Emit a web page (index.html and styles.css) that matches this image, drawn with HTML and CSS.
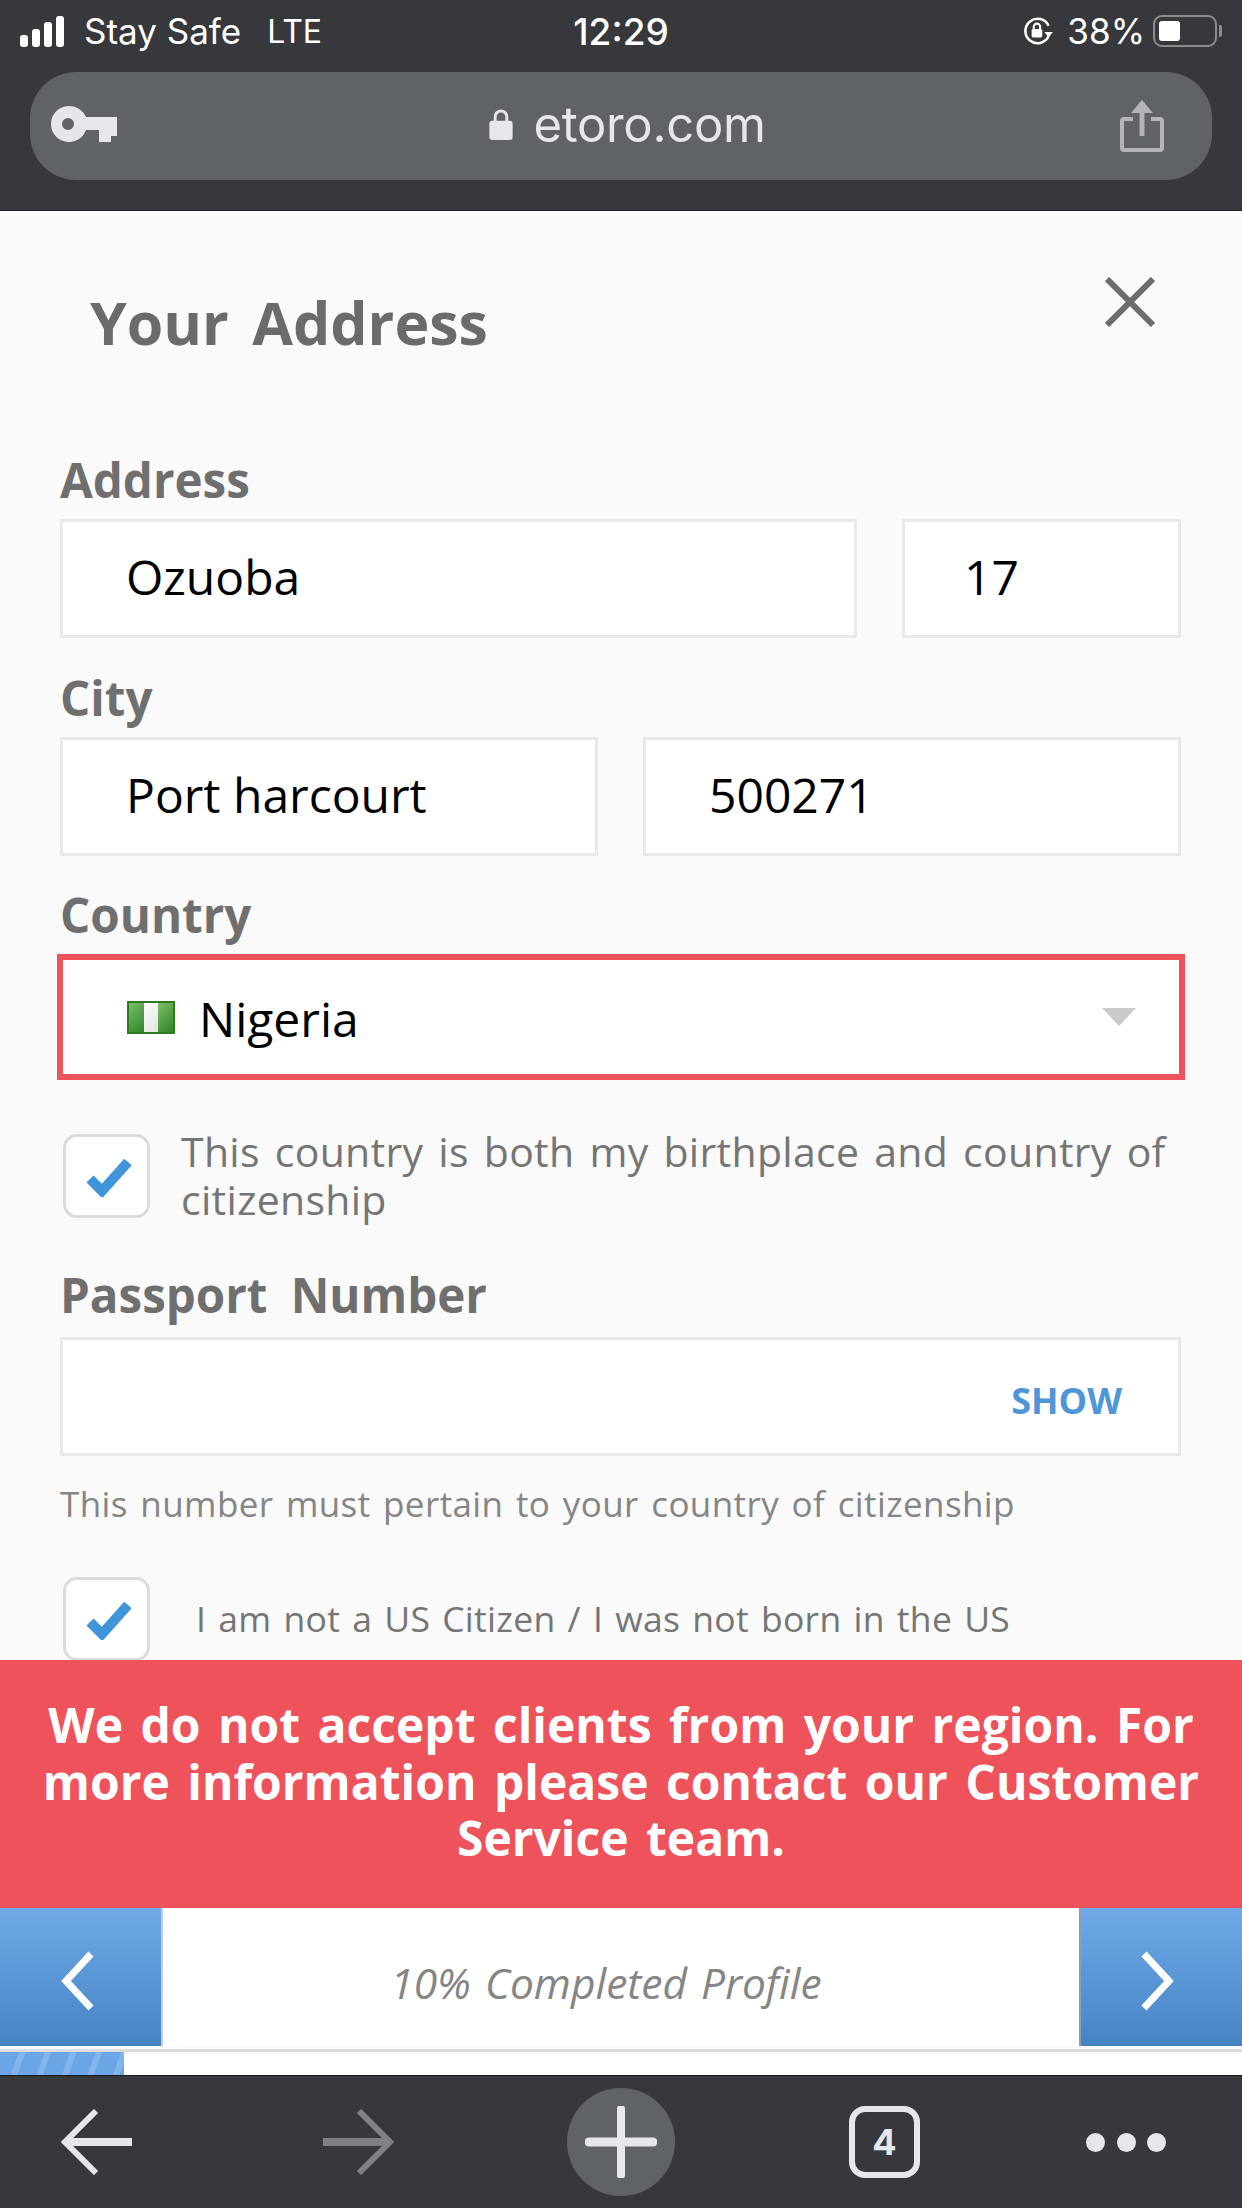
FILE: index.html
```html
<!DOCTYPE html>
<html lang="en">
<head>
    <meta charset="UTF-8">
    <meta name="viewport" content="width=device-width, initial-scale=1.0">
    <title>Your Address</title>
    <link rel="stylesheet" href="styles.css">
</head>
<body>
<div class="phone">

    <!-- Browser top bar -->
    <header class="browser-top">
        <div class="status-bar">
            <div class="status-left">
                <span class="signal"><i></i><i></i><i></i><i></i></span>
                <span class="carrier">Stay Safe</span>
                <span class="network">LTE</span>
            </div>
            <div class="status-time">12:29</div>
            <div class="status-right">
                <svg class="lock-rotate" viewBox="0 0 28 32" width="30" height="34">
                    <path d="M24 21a11.500 11.500 0 1 1 0-10" fill="none" stroke="#fff" stroke-width="2.4"/>
                    <path d="M20 17h8l-4 5z" fill="#fff"/>
                    <rect x="8" y="14" width="10" height="8" rx="1.500" fill="#fff"/>
                    <path d="M10 14V12a3 3 0 0 1 6 0v2" fill="none" stroke="#fff" stroke-width="2"/>
                </svg>
                <span class="battery-text">38%</span>
                <span class="battery"><span class="battery-level"></span></span>
                <span class="battery-tip"></span>
            </div>
        </div>
        <div class="url-bar">
            <svg class="key-icon" viewBox="0 0 66 36" width="66" height="36">
                <path d="M18 0a18 18 0 0 1 17 11h31v19h-6v6H48V24H35A18 18 0 1 1 18 0zm-1 12a6 6 0 1 0 0 12 6 6 0 0 0 0-12z" fill="#e6e7eb" fill-rule="evenodd"/>
            </svg>
            <div class="url-text">
                <svg viewBox="0 0 24 32" width="24" height="31">
                    <rect x="0" y="12" width="24" height="20" rx="3" fill="#e6e7eb"/>
                    <path d="M6 13V8a6 6 0 0 1 12 0v5" fill="none" stroke="#e6e7eb" stroke-width="3"/>
                </svg>
                <span>etoro.com</span>
            </div>
            <svg class="share-icon" viewBox="0 0 44 54" width="44" height="54">
                <path d="M13 21H4a2 2 0 0 0-2 2v27a2 2 0 0 0 2 2h36a2 2 0 0 0 2-2V23a2 2 0 0 0-2-2h-9" fill="none" stroke="#b3b5b9" stroke-width="4"/>
                <path d="M22 38V4" fill="none" stroke="#b3b5b9" stroke-width="5"/>
                <path d="M11 15 22 2l11 13z" fill="#b3b5b9"/>
            </svg>
        </div>
    </header>

    <!-- Address form -->
    <main class="content">
        <div class="title-row">
            <h1>Your Address</h1>
            <svg class="close-icon" viewBox="0 0 50 50" width="50" height="50">
                <path d="M2 2 48 48M48 2 2 48" stroke="#6d6d6d" stroke-width="6" fill="none"/>
            </svg>
        </div>

        <label class="field-label">Address</label>
        <div class="field-row row-address">
            <div class="input">Ozuoba</div>
            <div class="input input-short">17</div>
        </div>

        <label class="field-label">City</label>
        <div class="field-row row-city">
            <div class="input">Port harcourt</div>
            <div class="input">500271</div>
        </div>

        <label class="field-label">Country</label>
        <div class="select">
            <span class="flag"><i></i><i></i><i></i></span>
            <span class="select-text">Nigeria</span>
            <span class="caret"></span>
        </div>

        <div class="check-row check-birth">
            <span class="checkbox">
                <svg viewBox="0 0 46 38" width="46" height="38"><path d="M4 20 16 32 42 3" fill="none" stroke="#3f95d8" stroke-width="10"/></svg>
            </span>
            <p>This country is both my birthplace and country of citizenship</p>
        </div>

        <label class="field-label label-passport">Passport Number</label>
        <div class="input input-passport">
            <span class="show-link">SHOW</span>
        </div>
        <p class="hint">This number must pertain to your country of citizenship</p>

        <div class="check-row check-us">
            <span class="checkbox">
                <svg viewBox="0 0 46 38" width="46" height="38"><path d="M4 20 16 32 42 3" fill="none" stroke="#3f95d8" stroke-width="10"/></svg>
            </span>
            <p>I am not a US Citizen / I was not born in the US</p>
        </div>
    </main>

    <!-- Error banner -->
    <div class="error-banner">We do not accept clients from your region. For more information please contact our Customer Service team.</div>

    <!-- Step navigation -->
    <nav class="step-nav">
        <div class="step-btn">
            <svg viewBox="0 0 36 60" width="36" height="60"><path d="M31 3 6 30l25 27" fill="none" stroke="#fff" stroke-width="7"/></svg>
        </div>
        <div class="step-label">10% Completed Profile</div>
        <div class="step-btn">
            <svg viewBox="0 0 36 60" width="36" height="60"><path d="M5 3l25 27L5 57" fill="none" stroke="#fff" stroke-width="7"/></svg>
        </div>
    </nav>
    <div class="progress"><div class="progress-fill"></div></div>

    <!-- Browser bottom bar -->
    <footer class="browser-bottom">
        <svg viewBox="0 0 72 66" width="72" height="66"><path d="M36 2 5 33l31 31" fill="none" stroke="#e6e7eb" stroke-width="6"/><path d="M5 33h67" fill="none" stroke="#e6e7eb" stroke-width="8"/></svg>
        <svg viewBox="0 0 72 66" width="72" height="66"><path d="M36 2l31 31-31 31" fill="none" stroke="#808184" stroke-width="6"/><path d="M67 33H0" fill="none" stroke="#808184" stroke-width="8"/></svg>
        <span class="new-tab">
            <svg viewBox="0 0 72 72" width="72" height="72"><path d="M36 3v66" fill="none" stroke="#e6e7eb" stroke-width="8" stroke-linecap="round"/><path d="M4 36h64" fill="none" stroke="#e6e7eb" stroke-width="9" stroke-linecap="round"/></svg>
        </span>
        <span class="tabs-count">4</span>
        <span class="more-dots"><i></i><i></i><i></i></span>
    </footer>
</div>
</body>
</html>
```
FILE: styles.css
```css
/* General Styles */
* {
    box-sizing: border-box;
}

html, body {
    margin: 0;
    padding: 0;
}

body {
    font-family: 'Open Sans', sans-serif;
    background-color: #fafafa;
}

.phone {
    width: 1242px;
    height: 2208px;
    display: flex;
    flex-direction: column;
    overflow: hidden;
}

/* Browser top bar */
.browser-top {
    height: 211px;
    flex: none;
    background-color: #37383c;
    border-bottom: 1px solid #1c1c1e;
    padding: 0 30px;
}

.status-bar {
    height: 72px;
    margin: 0 -10px;
    padding-bottom: 10px;
    display: grid;
    grid-template-columns: 1fr auto 1fr;
    align-items: center;
    color: #fff;
    font-family: 'Inter', sans-serif;
    font-size: 35px;
}

.status-left {
    display: flex;
    align-items: center;
}

.signal {
    display: flex;
    align-items: flex-end;
    gap: 4px;
    height: 32px;
    margin-right: 20px;
}

.signal i {
    width: 8px;
    background-color: #fff;
    border-radius: 3px;
}

.signal i:nth-child(1) { height: 12px; }
.signal i:nth-child(2) { height: 18px; }
.signal i:nth-child(3) { height: 25px; }
.signal i:nth-child(4) { height: 31px; }

.carrier {
    margin-right: 26px;
}

.network {
    font-size: 32px;
}

.status-time {
    font-weight: 500;
    font-size: 37px;
}

.status-right {
    display: flex;
    align-items: center;
    justify-content: flex-end;
}

.lock-rotate {
    margin-right: 14px;
}

.battery-text {
    margin-right: 8px;
}

.battery {
    width: 64px;
    height: 32px;
    border: 2px solid #8b8c8f;
    border-radius: 9px;
    padding: 4px;
    display: block;
}

.battery-level {
    display: block;
    width: 21px;
    height: 100%;
    background-color: #fff;
    border-radius: 3px;
}

.battery-tip {
    width: 3px;
    height: 12px;
    margin-left: 2px;
    background-color: #8b8c8f;
    border-radius: 0 2px 2px 0;
}

.url-bar {
    height: 108px;
    background-color: #5f6266;
    border-radius: 46px;
    display: flex;
    align-items: center;
    justify-content: space-between;
    padding: 0 48px 0 21px;
}

.url-text {
    display: flex;
    align-items: center;
    gap: 20px;
    color: #e6e7eb;
    font-family: 'Inter', sans-serif;
    font-size: 49px;
    letter-spacing: -0.3px;
    padding-left: 18px;
    margin-top: -4px;
}

.key-icon {
    margin-top: -4px;
}

.share-icon {
    margin-top: -2px;
}

/* Form */
.content {
    flex: 1;
    min-height: 0;
    overflow: hidden;
    padding: 0 61px 0 60px;
    color: #6b6b6b;
}

.title-row {
    height: 225px;
    padding: 71px 26px 0 30px;
    display: flex;
    justify-content: space-between;
    align-items: flex-start;
}

h1 {
    margin: 0;
    font-size: 59px;
    line-height: 80px;
    font-weight: 700;
    word-spacing: 8px;
    color: #6b6b6b;
}

.close-icon {
    margin-top: -5px;
}

.field-label {
    display: block;
    padding: 13px 0 8px;
    font-size: 47.500px;
    line-height: 62px;
    font-weight: 700;
    color: #6f6f6f;
    word-spacing: 11px;
}

.field-row {
    display: grid;
    gap: 45px;
}

.row-address {
    grid-template-columns: 1fr 279px;
    margin-bottom: 16px;
}

.row-city {
    grid-template-columns: 1fr 1fr;
    margin-bottom: 15px;
}

.input {
    height: 119px;
    background-color: #fff;
    border: 3px solid #e9e9e9;
    padding-left: 63px;
    color: #000;
    font-size: 48px;
    line-height: 110px;
}

.input-short {
    padding-left: 59px;
}

.select {
    height: 126px;
    margin: 0 -4px 0 -3px;
    background-color: #fff;
    border: 6px solid #ee525b;
    display: flex;
    align-items: center;
    padding: 0 43px 0 64px;
    color: #000;
    font-size: 48px;
}

.flag {
    display: flex;
    width: 48px;
    height: 33px;
    margin-right: 24px;
    border: 2px solid #2f7a22;
}

.flag i {
    flex: 1;
    background: linear-gradient(135deg, #7cc066, #2f8526);
}

.flag i:nth-child(2) {
    background: linear-gradient(135deg, #ffffff, #dfe4dd);
}

.select-text {
    flex: 1;
    padding-top: 3px;
}

.caret {
    width: 0;
    height: 0;
    border-left: 17px solid transparent;
    border-right: 17px solid transparent;
    border-top: 18px solid #cacaca;
}

/* Checkboxes */
.check-row {
    display: flex;
    font-size: 41px;
    color: #757575;
}

.check-row p {
    margin: 0;
    letter-spacing: 0.3px;
    word-spacing: 4px;
}

.check-birth {
    margin-top: 54px;
    padding-left: 3px;
    line-height: 48px;
}

.check-birth p {
    margin-left: 31px;
    margin-top: -7px;
}

.checkbox {
    width: 87px;
    height: 84px;
    flex: none;
    background-color: #fff;
    border: 3px solid #dcdcdc;
    border-radius: 14px;
    display: flex;
    align-items: center;
    justify-content: center;
    padding: 3px 0 0 5px;
}

.label-passport {
    margin-top: 31px;
    padding: 10px 0 11px;
}

.input-passport {
    display: flex;
    align-items: center;
    justify-content: flex-end;
    padding: 8px 56px 0 0;
}

.show-link {
    color: #4f96d8;
    font-size: 36px;
    line-height: 48px;
    font-weight: 700;
}

.hint {
    margin: 24px 0 0;
    font-size: 35px;
    line-height: 48px;
    color: #858585;
    letter-spacing: 0.4px;
    word-spacing: 3px;
}

.check-us {
    margin-top: 49px;
    padding-left: 3px;
    font-size: 35.500px;
    align-items: center;
}

.check-us p {
    margin-left: 46px;
    margin-top: -2px;
    color: #757575;
    word-spacing: 2.500px;
}

/* Error banner */
.error-banner {
    height: 248px;
    flex: none;
    background-color: #ee525b;
    color: #fff;
    font-size: 48px;
    line-height: 56.500px;
    font-weight: 700;
    text-align: center;
    padding: 37px 30px 0;
    word-spacing: 5px;
}

/* Step navigation */
.step-nav {
    height: 138px;
    flex: none;
    display: flex;
    background-color: #fff;
}

.step-btn {
    width: 163px;
    flex: none;
    background: linear-gradient(to bottom, #6fa9e8, #4584c3);
    display: flex;
    align-items: center;
    justify-content: center;
    border-right: 2px solid #c2cfdc;
    padding: 8px 6px 0 0;
}

.step-btn:last-child {
    border-right: none;
    border-left: 2px solid #8ca0b5;
    padding-right: 10px;
}

.step-label {
    flex: 1;
    text-align: center;
    font-style: italic;
    font-size: 42.500px;
    line-height: 150px;
    color: #858585;
    word-spacing: 3px;
    padding-right: 30px;
}

.progress {
    height: 26px;
    flex: none;
    margin-top: 3px;
    background-color: #fff;
    border-top: 3px solid #dedede;
}

.progress-fill {
    width: 124px;
    height: 100%;
    background: repeating-linear-gradient(110deg, #6aa5e6 0 18px, #83b5ec 18px 24px);
}

/* Browser bottom bar */
.browser-bottom {
    height: 133px;
    flex: none;
    background-color: #37383c;
    border-top: 1px solid #1c1c1e;
    display: grid;
    grid-template-columns: 60px 72px 191px 72px 172px 108px 174px 71px 166px 80px 76px;
    align-items: center;
}

.browser-bottom > svg:nth-child(1) {
    grid-column: 2;
}

.browser-bottom > svg:nth-child(2) {
    grid-column: 4;
}

.new-tab {
    grid-column: 6;
    width: 108px;
    height: 108px;
    border-radius: 50%;
    background-color: #5f6266;
    display: flex;
    align-items: center;
    justify-content: center;
}

.tabs-count {
    grid-column: 8;
    height: 72px;
    border: 6px solid #e6e7eb;
    border-radius: 16px;
    color: #e6e7eb;
    font-family: 'Inter', sans-serif;
    font-size: 36px;
    font-weight: 700;
    line-height: 60px;
    text-align: center;
}

.more-dots {
    grid-column: 10;
    display: flex;
    justify-content: space-between;
}

.more-dots i {
    width: 19px;
    height: 19px;
    background-color: #e6e7eb;
    border-radius: 50%;
}
```
